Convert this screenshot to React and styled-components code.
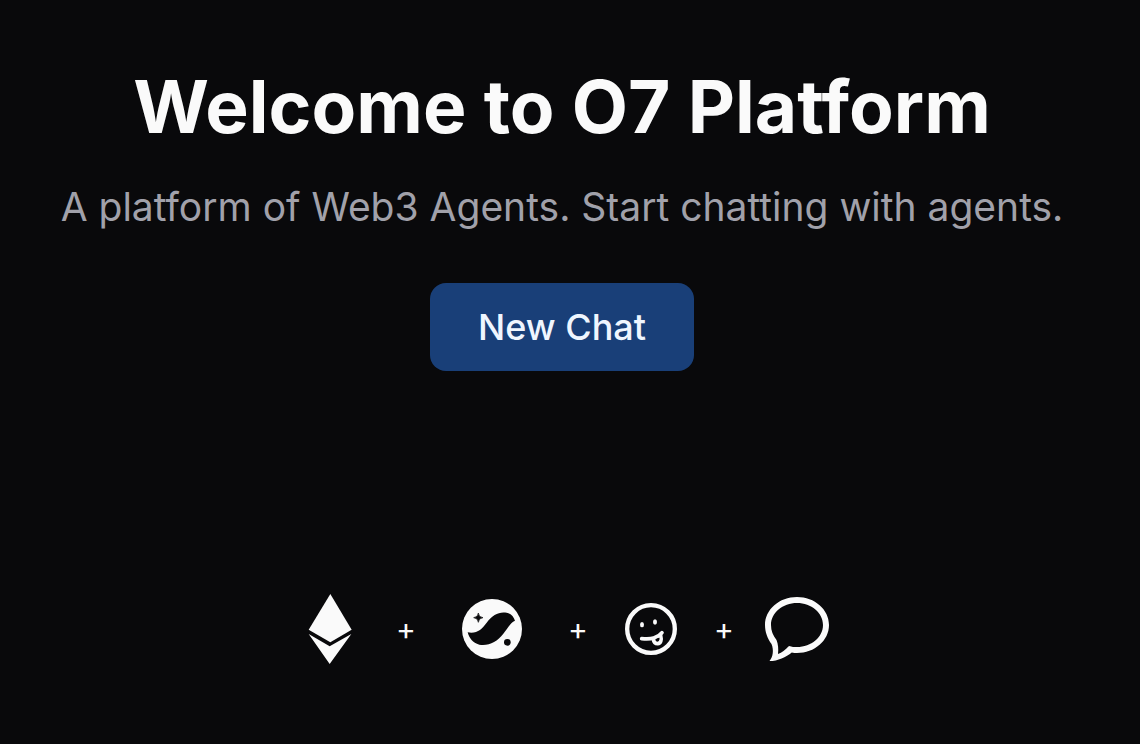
import React from "react";
import styled, { createGlobalStyle } from "styled-components";

const GlobalStyle = createGlobalStyle`
  *, *::before, *::after { box-sizing: border-box; }
  body {
    margin: 0;
    background: #09090b;
    color: #fafafa;
    font-family: Inter, "Liberation Sans", sans-serif;
  }
`;

const Page = styled.main`
  display: flex;
  flex-direction: column;
  align-items: center;
  min-height: 100vh;
  padding: 71px 16px 0 0;
`;

const Title = styled.h1`
  margin: 0;
  font-size: 73px;
  line-height: 72px;
  font-weight: 700;
  text-align: center;
`;

const Subtitle = styled.p`
  margin: 36px 0 0;
  color: #a1a1aa;
  font-size: 39px;
  line-height: 56px;
  text-align: center;
`;

const PrimaryButton = styled.button`
  height: 88px;
  margin: 48px 0 0;
  padding: 0 48px;
  border: 0;
  border-radius: 16px;
  background: #193f78;
  color: #eff6ff;
  font: inherit;
  font-size: 36px;
  line-height: 56px;
  font-weight: 500;
  cursor: pointer;
`;

const LogoRow = styled.div`
  display: flex;
  align-items: center;
  gap: 32px;
  margin-top: 223px;
`;

const LogoSlot = styled.div`
  display: flex;
  justify-content: center;
  flex: none;
  width: ${(p) => p.$width}px;

  svg {
    display: block;
    fill: currentColor;
  }
`;

const Plus = styled.span`
  display: flex;
  justify-content: center;
  width: 18px;
  font-size: 30px;
  line-height: 36px;
`;

function EthereumLogo() {
  return (
    <svg width="44" height="70" viewBox="54 42 132 210" aria-hidden="true">
      <path d="M121 42 185 149 121 187 56 149Z" />
      <path d="M56 162 119 199 184 162 119 252Z" />
    </svg>
  );
}

function WaveLogo() {
  return (
    <svg width="60" height="60" viewBox="36 41 180 180" aria-hidden="true">
      <circle cx="126" cy="131" r="90" />
      <g fill="#09090b">
        <path d="M53 141C81 146 95 132 110 112C128 88 147 78 170 82C184 85 191 95 195 106C182 111 174 127 160 145C141 170 117 182 88 178C68 173 58 159 53 141Z" />
        <path d="M85 83Q86 96 99 97Q86 98 85 111Q84 98 71 97Q84 96 85 83Z" stroke="#09090b" strokeWidth="2" />
        <circle cx="172" cy="171" r="10" />
      </g>
    </svg>
  );
}

function FaceLogo() {
  return (
    <svg width="52" height="52" viewBox="45 39 156 156" aria-hidden="true">
      <circle cx="123" cy="117" r="71.5" fill="none" stroke="currentColor" strokeWidth="13" />
      <ellipse cx="96" cy="104" rx="6" ry="8" />
      <ellipse cx="135" cy="96" rx="6" ry="8" />
      <g fill="none" stroke="currentColor" strokeWidth="11" strokeLinecap="round" strokeLinejoin="round">
        <path d="M95 146C107 147 120 148 131 144C142 141 150 136 156 128" />
        <path d="M130 147C131 156 136 161 143 161C152 160 156 151 152 137" />
      </g>
      <path d="M138 147Q144 144 148 143Q149 150 144 152Q139 152 138 147Z" fill="#09090b" />
    </svg>
  );
}

function ChatLogo() {
  return (
    <svg width="64" height="64" viewBox="0 0 64 64" aria-hidden="true">
      <path
        fillRule="evenodd"
        d="M32 0C49.700 0 64 12.500 64 28S49.700 56 32 56C30 56 28.500 56 26.800 55.400C21 60 13 64 4.500 64C8 60 9 53 6.500 47C2.500 41.500 0 35 0 28C0 12.500 14.300 0 32 0ZM32 6C17.600 6 6 15.800 6 28C6 34 8 38.500 11.500 43C13.200 47 13.600 52 13 57C17 55.500 20 53 24 49C27 50 29 50 32 50C46.400 50 58 40.200 58 28S46.400 6 32 6Z"
      />
    </svg>
  );
}

export default function App() {
  return (
    <>
      <GlobalStyle />
      <Page>
        <Title>Welcome to O7 Platform</Title>
        <Subtitle>A platform of Web3 Agents. Start chatting with agents.</Subtitle>
        <PrimaryButton type="button">New Chat</PrimaryButton>
        <LogoRow>
          <LogoSlot $width={70}><EthereumLogo /></LogoSlot>
          <Plus>+</Plus>
          <LogoSlot $width={90}><WaveLogo /></LogoSlot>
          <Plus>+</Plus>
          <LogoSlot $width={64}><FaceLogo /></LogoSlot>
          <Plus>+</Plus>
          <LogoSlot $width={64}><ChatLogo /></LogoSlot>
        </LogoRow>
      </Page>
    </>
  );
}
